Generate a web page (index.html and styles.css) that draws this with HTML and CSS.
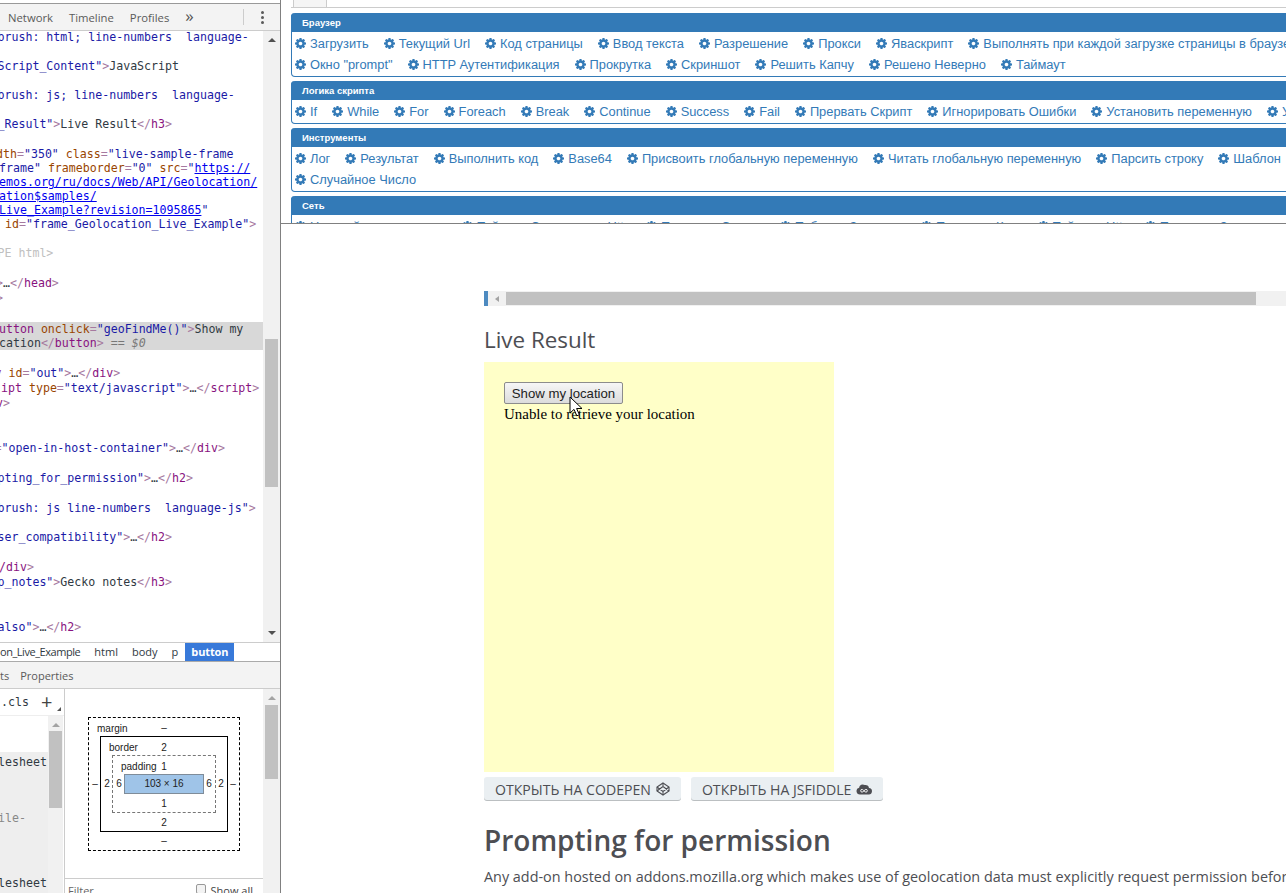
FILE: index.html
```html
<!DOCTYPE html>
<html lang="ru">
<head>
<meta charset="utf-8">
<title>Live Result</title>
<link rel="stylesheet" href="styles.css">
</head>
<body>
<svg class="defs" width="0" height="0" aria-hidden="true">
  <symbol id="cog" viewBox="0 0 1536 1536"><path d="M1024 768q0-106-75-181t-181-75-181 75-75 181 75 181 181 75 181-75 75-181zm512-109v222q0 12-8 23t-20 13l-185 28q-19 54-39 91 35 50 107 138 10 12 10 25t-9 23q-27 37-99 108t-94 71q-12 0-26-9l-138-108q-44 23-91 38-16 136-29 186-7 28-36 28h-222q-14 0-24.5-8.5t-11.5-21.5l-28-184q-49-16-90-37l-141 107q-10 9-25 9-14 0-25-11-126-114-165-168-7-10-7-23 0-12 8-23 15-21 51-66.5t54-70.5q-27-50-41-99l-183-27q-13-2-21-12.5t-8-23.5v-222q0-12 8-23t19-13l186-28q14-46 39-92-40-57-107-138-10-12-10-24 0-10 9-23 26-36 98.5-107.5t94.5-71.5q13 0 26 10l138 107q44-23 91-38 16-136 29-186 7-28 36-28h222q14 0 24.5 8.5t11.5 21.5l28 184q49 16 90 37l142-107q9-9 24-9 13 0 25 10 129 119 165 170 7 8 7 22 0 12-8 23-15 21-51 66.5t-54 70.5q26 50 41 98l183 28q13 2 21 12.5t8 23.5z"/></symbol>
</svg>

<aside class="devtools">
  <div class="toolbar">
    <span class="tool first">Network</span>
    <span class="tool">Timeline</span>
    <span class="tool">Profiles</span>
    <span class="more">»</span>
    <span class="tsep"></span>
    <span class="kebab"><i></i><i></i><i></i></span>
  </div>

  <div class="elements">
    <div class="code">
      <div class="ln"><span class="v">brush: html; line-numbers  language-</span></div>
      <div class="ln g15"><span class="v">Script_Content"</span><span class="b">&gt;</span>JavaScript</div>
      <div class="ln g15"><span class="v">brush: js; line-numbers  language-</span></div>
      <div class="ln g15"><span class="v">_Result"</span><span class="b">&gt;</span>Live Result<span class="b">&lt;/</span><span class="t">h3</span><span class="b">&gt;</span></div>
      <div class="ln g16 far"><span class="a">dth</span><span class="b">=</span><span class="v">"350"</span> <span class="a">class</span><span class="b">=</span><span class="v">"live-sample-frame</span></div>
      <div class="ln near"><span class="v">frame"</span> <span class="a">frameborder</span><span class="b">=</span><span class="v">"0"</span> <span class="a">src</span><span class="b">=</span><span class="v">"</span><span class="u">https://</span></div>
      <div class="ln near"><span class="u">emos.org/ru/docs/Web/API/Geolocation/</span></div>
      <div class="ln near"><span class="u">ation$samples/</span></div>
      <div class="ln near"><span class="u">Live_Example?revision=1095865</span><span class="v">"</span></div>
      <div class="ln in5"><span class="a">id</span><span class="b">=</span><span class="v">"frame_Geolocation_Live_Example"</span><span class="b">&gt;</span></div>
      <div class="ln g15"><span class="d">PE html&gt;</span></div>
      <div class="ln g16 far"><span class="b">&gt;</span>…<span class="b">&lt;/</span><span class="t">head</span><span class="b">&gt;</span></div>
      <div class="ln g1 far"><span class="b">&gt;</span></div>
      <div class="sel">
        <div class="ln near"><span class="t">utton</span> <span class="a">onclick</span><span class="b">=</span><span class="v">"geoFindMe()"</span><span class="b">&gt;</span>Show my</div>
        <div class="ln near"><span>cation</span><span class="b">&lt;/</span><span class="t">button</span><span class="b">&gt;</span> <span class="d2">==</span> <em class="d2">$0</em></div>
      </div>
      <div class="ln g16 far2"><span class="t">v</span> <span class="a">id</span><span class="b">=</span><span class="v">"out"</span><span class="b">&gt;</span>…<span class="b">&lt;/</span><span class="t">div</span><span class="b">&gt;</span></div>
      <div class="ln g1 in1"><span class="t">ipt</span> <span class="a">type</span><span class="b">=</span><span class="v">"text/javascript"</span><span class="b">&gt;</span>…<span class="b">&lt;/</span><span class="t">script</span><span class="b">&gt;</span></div>
      <div class="ln g1 far"><span class="t">v</span><span class="b">&gt;</span></div>
      <div class="ln g31 far2"><span class="b">=</span><span class="v">"open-in-host-container"</span><span class="b">&gt;</span>…<span class="b">&lt;/</span><span class="t">div</span><span class="b">&gt;</span></div>
      <div class="ln g16"><span class="v">pting_for_permission"</span><span class="b">&gt;</span>…<span class="b">&lt;/</span><span class="t">h2</span><span class="b">&gt;</span></div>
      <div class="ln g16"><span class="v">brush: js line-numbers  language-js"</span><span class="b">&gt;</span></div>
      <div class="ln g15"><span class="v">ser_compatibility"</span><span class="b">&gt;</span>…<span class="b">&lt;/</span><span class="t">h2</span><span class="b">&gt;</span></div>
      <div class="ln g16 near"><span class="t">/div</span><span class="b">&gt;</span></div>
      <div class="ln g1"><span class="v">p_notes"</span><span class="b">&gt;</span>Gecko notes<span class="b">&lt;/</span><span class="t">h3</span><span class="b">&gt;</span></div>
      <div class="ln g31"><span class="v">also"</span><span class="b">&gt;</span>…<span class="b">&lt;/</span><span class="t">h2</span><span class="b">&gt;</span></div>
    </div>
    <div class="scroll main-scroll">
      <span class="arr up"></span>
      <span class="thumb el-thumb"></span>
      <span class="arr down"></span>
    </div>
  </div>

  <div class="crumbs">
    <span class="crumb lead">on_Live_Example</span>
    <span class="crumb">html</span>
    <span class="crumb">body</span>
    <span class="crumb">p</span>
    <span class="crumb on">button</span>
  </div>

  <div class="tabs"><span>ts</span><span>Properties</span></div>

  <div class="lower">
    <div class="styles">
      <div class="stylebar"><span class="cls">.cls</span><span class="plus">+</span><span class="corner"></span></div>
      <div class="stylebody">
        <div class="rules">
          <div class="rule-blank"></div>
          <div class="rule-grey">
            <div class="rl one">lesheet</div>
            <div class="rl two">ile-</div>
            <div class="rl three">lesheet</div>
          </div>
        </div>
        <div class="scroll mini-scroll"><span class="arr up pale"></span><span class="thumb st-thumb"></span></div>
      </div>
    </div>
    <div class="computed">
      <div class="boxpane">
        <div class="bm bm-margin">
          <span class="bm-label">margin</span>
          <div class="bm-top">–</div>
          <div class="bm-side">–</div>
          <div class="bm bm-border">
            <span class="bm-label">border</span>
            <div class="bm-top">2</div>
            <div class="bm-side">2</div>
            <div class="bm bm-padding">
              <span class="bm-label">padding</span>
              <div class="bm-top">1</div>
              <div class="bm-side">6</div>
              <div class="bm-content">103 × 16</div>
              <div class="bm-side">6</div>
              <div class="bm-top">1</div>
            </div>
            <div class="bm-side">2</div>
            <div class="bm-top">2</div>
          </div>
          <div class="bm-side">–</div>
          <div class="bm-top">–</div>
        </div>
      </div>
      <div class="filter"><span>Filter</span><label class="showall"><span class="check"></span>Show all</label></div>
    </div>
    <div class="scroll low-scroll"><span class="arr up pale"></span><span class="thumb lo-thumb"></span></div>
  </div>
</aside>

<main class="right">
  <section class="blocks">
    <div class="topstub"><span class="stubtab"></span></div>

    <div class="group">
      <h4>Браузер</h4>
      <div class="row">
        <a><svg><use href="#cog"/></svg>Загрузить</a>
        <a><svg><use href="#cog"/></svg>Текущий Url</a>
        <a><svg><use href="#cog"/></svg>Код страницы</a>
        <a><svg><use href="#cog"/></svg>Ввод текста</a>
        <a><svg><use href="#cog"/></svg>Разрешение</a>
        <a><svg><use href="#cog"/></svg>Прокси</a>
        <a><svg><use href="#cog"/></svg>Яваскрипт</a>
        <a><svg><use href="#cog"/></svg>Выполнять при каждой загрузке страницы в браузере</a>
      </div>
      <div class="row">
        <a><svg><use href="#cog"/></svg>Окно "prompt"</a>
        <a><svg><use href="#cog"/></svg>HTTP Аутентификация</a>
        <a><svg><use href="#cog"/></svg>Прокрутка</a>
        <a><svg><use href="#cog"/></svg>Скриншот</a>
        <a><svg><use href="#cog"/></svg>Решить Капчу</a>
        <a><svg><use href="#cog"/></svg>Решено Неверно</a>
        <a><svg><use href="#cog"/></svg>Таймаут</a>
      </div>
    </div>

    <div class="group">
      <h4>Логика скрипта</h4>
      <div class="row">
        <a><svg><use href="#cog"/></svg>If</a>
        <a><svg><use href="#cog"/></svg>While</a>
        <a><svg><use href="#cog"/></svg>For</a>
        <a><svg><use href="#cog"/></svg>Foreach</a>
        <a><svg><use href="#cog"/></svg>Break</a>
        <a><svg><use href="#cog"/></svg>Continue</a>
        <a><svg><use href="#cog"/></svg>Success</a>
        <a><svg><use href="#cog"/></svg>Fail</a>
        <a><svg><use href="#cog"/></svg>Прервать Скрипт</a>
        <a><svg><use href="#cog"/></svg>Игнорировать Ошибки</a>
        <a><svg><use href="#cog"/></svg>Установить переменную</a>
        <a><svg><use href="#cog"/></svg>Увеличить переменную</a>
      </div>
    </div>

    <div class="group">
      <h4>Инструменты</h4>
      <div class="row">
        <a><svg><use href="#cog"/></svg>Лог</a>
        <a><svg><use href="#cog"/></svg>Результат</a>
        <a><svg><use href="#cog"/></svg>Выполнить код</a>
        <a><svg><use href="#cog"/></svg>Base64</a>
        <a><svg><use href="#cog"/></svg>Присвоить глобальную переменную</a>
        <a><svg><use href="#cog"/></svg>Читать глобальную переменную</a>
        <a><svg><use href="#cog"/></svg>Парсить строку</a>
        <a><svg><use href="#cog"/></svg>Шаблон</a>
      </div>
      <div class="row">
        <a><svg><use href="#cog"/></svg>Случайное Число</a>
      </div>
    </div>

    <div class="group">
      <h4>Сеть</h4>
      <div class="row">
        <a><svg><use href="#cog"/></svg>Настройки соединения</a>
        <a><svg><use href="#cog"/></svg>Таймаут Соединения Http</a>
        <a><svg><use href="#cog"/></svg>Получить Ответы</a>
        <a><svg><use href="#cog"/></svg>Таблица Запросов</a>
        <a><svg><use href="#cog"/></svg>Получить Куки</a>
        <a><svg><use href="#cog"/></svg>Таймаут Http</a>
        <a><svg><use href="#cog"/></svg>Получить Запрос</a>
      </div>
    </div>
  </section>

  <article class="doc">
    <div class="hscroll"><span class="hs-arrow"></span><span class="hs-thumb"></span></div>
    <h3>Live Result</h3>
    <div class="sample">
      <button class="native" type="button">Show my location</button>
      <div class="sample-out">Unable to retrieve your location</div>
      <svg class="cursor" width="15" height="22" viewBox="0 0 15 22"><path d="M1 1v16l4-3.600 2.800 6.400 2.600-1.100-2.800-6.200H13z" fill="#fff" stroke="#000" stroke-width="1"/></svg>
    </div>
    <div class="open-btns">
      <a class="btn">Открыть на CodePen
        <svg width="14" height="14" viewBox="0 0 14 14" fill="none" stroke="#4d4e53" stroke-width="1.1"><path d="M7 1l6 4v4l-6 4-6-4V5z"/><path d="M7 1v3.500M7 9.500V13M1 5l6 4.500L13 5M1 9l6-4.500L13 9"/></svg>
      </a>
      <a class="btn">Открыть на JSFiddle
        <svg width="16" height="12" viewBox="0 0 16 12"><path d="M4 11.500a3.400 3.400 0 0 1-.9-6.700 3.600 3.600 0 0 1 5.600-2.700 3.400 3.400 0 0 1 4.300 2.900 2.900 2.900 0 0 1-.6 6.500z" fill="#4d4e53"/><path d="M8 7.800c-.8-1-1.400-1.400-2-1.400a1.350 1.350 0 0 0 0 2.700c.6 0 1.200-.4 2-1.300.8-.9 1.400-1.400 2-1.400a1.350 1.350 0 0 1 0 2.700c-.6 0-1.200-.4-2-1.300z" fill="none" stroke="#fff" stroke-width=".9"/></svg>
      </a>
    </div>
    <h2>Prompting for permission</h2>
    <p>Any add-on hosted on addons.mozilla.org which makes use of geolocation data must explicitly request permission before doing so.</p>
  </article>
</main>
</body>
</html>
```

FILE: styles.css
```css
* { box-sizing: border-box; }
html, body { margin: 0; height: 893px; overflow: hidden; background: #fff; }
body { display: flex; width: 1286px; font-family: "Open Sans", sans-serif; }
.defs { position: absolute; }

/* devtools */
.devtools {
  width: 281px; height: 893px; flex: none; display: flex; flex-direction: column;
  border-right: 1px solid #808080; overflow: hidden; background: #fff;
}
.toolbar {
  height: 28px; flex: none; margin-top: 3px; display: flex; align-items: center;
  background: #f3f3f3; border-top: 1px solid #999; border-bottom: 1px solid #ccc;
  font-size: 11.3px; color: #5a5a5a;
}
.tool { margin-right: 16px; }
.tool.first { margin-left: 8px; }
.more { font-size: 17px; line-height: 1; color: #555; margin-top: -3px; }
.tsep { width: 1px; height: 16px; background: #ccc; margin-left: 49px; }
.kebab { display: flex; flex-direction: column; gap: 2px; margin-left: 17px; }
.kebab i { width: 3px; height: 3px; background: #5a5a5a; border-radius: 50%; display: block; }

.elements { height: 611px; flex: none; display: flex; }
.code {
  flex: 1; min-width: 0; overflow: hidden;
  font: 11.6px/14px "DejaVu Sans Mono", monospace; color: #303942;
}
.ln { height: 14px; margin-left: -2.5px; white-space: pre; }
.code > .ln:first-child { margin-top: -1px; }
.near { margin-left: -1px; }
.far { margin-left: -4px; }
.far2 { margin-left: -5.5px; }
.in5 { margin-left: 5px; }
.in1 { margin-left: 1px; }
.g1 { margin-top: 1px; }
.g15 { margin-top: 15px; }
.g16 { margin-top: 16px; }
.g31 { margin-top: 31px; }
.sel { background: #d8d8d8; height: 28px; margin-top: 17px; }
.sel + .ln { margin-top: 16px; }
.code .t { color: #881280; }
.code .a { color: #994500; }
.code .v { color: #1a1aa6; }
.code .b { color: #a6799f; }
.code .d { color: #c0c0c0; }
.code .d2 { color: #777; }
.code .u { color: #0000ee; text-decoration: underline; }

.scroll { flex: none; background: #f1f1f1; display: flex; flex-direction: column; align-items: center; }
.main-scroll { width: 17px; }
.thumb { display: block; background: #c1c1c1; width: 13px; }
.arr { width: 0; height: 0; border-left: 4px solid transparent; border-right: 4px solid transparent; display: block; }
.arr.up { border-bottom: 4px solid #505050; margin-top: 7px; }
.arr.up.pale { border-bottom-color: #a3a3a3; }
.arr.down { border-top: 4px solid #505050; margin-top: auto; margin-bottom: 7px; }
.el-thumb { height: 148px; margin-top: 297px; }

.crumbs {
  height: 20px; flex: none; display: flex; border-top: 1px solid #ccc; border-bottom: 1px solid #aaa;
  font-size: 11px; line-height: 18px; color: #303942;
}
.crumb { padding: 0 7px; }
.crumb.lead { padding: 0 7px 0 0; letter-spacing: -.45px; }
.crumb.on { background: #3879d9; color: #fff; font-weight: 700; padding: 0 6px; letter-spacing: -.1px; }

.tabs {
  height: 27px; flex: none; display: flex; gap: 11px; align-items: center; background: #f3f3f3;
  border-bottom: 1px solid #ccc; font-size: 11px; color: #5a5a5a; padding-top: 1px;
}

.lower { flex: 1; min-height: 0; display: flex; }
.styles { width: 65px; flex: none; display: flex; flex-direction: column; border-right: 1px solid #ccc; overflow: hidden; }
.stylebar { height: 27px; flex: none; display: flex; align-items: center; position: relative; border-bottom: 1px solid #eee; }
.cls { font: 11.6px "DejaVu Sans Mono", monospace; color: #303942; margin-left: 1px; }
.plus { font-size: 20px; line-height: 1; color: #444; margin-left: 12px; }
.corner { position: absolute; right: 3px; bottom: 4px; width: 0; height: 0; border-left: 4px solid transparent; border-bottom: 4px solid #555; }
.stylebody { flex: 1; display: flex; min-height: 0; }
.rules { flex: none; width: 48px; display: flex; flex-direction: column; font: 11.6px/14px "DejaVu Sans Mono", monospace; color: #303942; overflow: hidden; }
.rule-blank { height: 36px; flex: none; }
.rule-grey { flex: 1; background: #eee; padding-top: 3px; }
.rl { height: 14px; margin-left: -2px; white-space: pre; }
.rl.two { margin-top: 42px; color: #888; }
.rl.three { margin-top: 51px; }
.mini-scroll { width: 15px; }
.st-thumb { height: 77px; margin-top: 4px; }
.computed { flex: 1; min-width: 0; display: flex; flex-direction: column; }
.boxpane { flex: 1; padding: 28px 0 0 23px; }
.bm {
  display: grid; grid-template-columns: 12px 1fr 12px; grid-template-rows: 19px 1fr 19px;
  position: relative; font: 10px/1 "Liberation Sans", sans-serif; color: #222; text-align: center;
}
.bm-margin { width: 152px; height: 134px; border: 1px dashed #000; }
.bm-border { border: 1px solid #000; margin: -1px; }
.bm-padding { border: 1px dashed #777; margin: -1px; }
.bm-top { grid-column: 1 / -1; align-self: center; padding-top: 2px; }
.bm-margin > .bm-top { padding-top: 0; }
.bm-side { align-self: center; }
.bm-label { position: absolute; left: 8px; top: 6px; }
.bm-content { background: #9fc4e8; border: 1px solid #7f8c99; margin: -1px; display: flex; align-items: center; justify-content: center; }
.filter {
  height: 15px; flex: none; border-top: 1px solid #ccc; display: flex; justify-content: space-between;
  font-size: 11px; line-height: 24px; color: #666; padding: 0 10px 0 3px; overflow: hidden;
}
.showall { display: flex; color: #444; }
.check { width: 10px; height: 10px; border: 1px solid #999; border-radius: 2px; margin: 5px 5px 0 0; background: #f3f3f3; }
.low-scroll { width: 17px; }
.lo-thumb { height: 74px; margin-top: 5px; }

/* right */
.right { flex: 1; min-width: 0; display: flex; flex-direction: column; overflow: hidden; }
.blocks { height: 224px; flex: none; overflow: hidden; border-bottom: 1px solid #808080; padding-left: 10px; }
.topstub { height: 8px; border-bottom: 1px solid #ccc; margin-bottom: 5px; width: 1100px; }
.stubtab { display: block; width: 34px; height: 8px; margin-left: 2px; background: #f5f5f5; border: 1px solid #ccc; border-top: 0; }
.group {
  width: 1100px; margin-bottom: 4px; border: 1px solid #337ab7; border-top: 0; border-radius: 4px;
  padding-bottom: 1px; font-family: "Liberation Sans", sans-serif;
}
.group h4 {
  margin: 0 -1px 1px; height: 19px; background: #337ab7; color: #fff; border-radius: 4px 4px 0 0;
  font-size: 9.5px; line-height: 19px; font-weight: 700; padding-left: 11px;
}
.row { display: flex; gap: 15px; height: 21px; align-items: center; padding-left: 3px; white-space: nowrap; }
.row a { display: flex; align-items: center; gap: 4px; color: #337ab7; font-size: 12.85px; flex: none; }
.row svg { width: 11px; height: 11px; fill: #337ab7; flex: none; }

.doc { flex: 1; padding: 67px 0 0 203px; color: #4d4e53; white-space: nowrap; }
.hscroll { height: 15px; display: flex; align-items: center; background: #f1f1f1; border-left: 4px solid #4d8ac0; }
.hs-arrow { width: 0; height: 0; border-top: 3px solid transparent; border-bottom: 3px solid transparent; border-right: 4px solid #a3a3a3; margin-left: 7px; }
.hs-thumb { width: 750px; height: 13px; background: #c1c1c1; margin-left: 7px; }
.doc h3 { margin: 19px 0 8px; font-size: 22.4px; line-height: 29px; font-weight: 400; }
.sample { width: 350px; height: 410px; background: #ffffc8; padding: 20px; position: relative; }
.native {
  display: block; width: 119px; height: 22px; padding: 2px 6px 0; margin: 0;
  font: 13.2px/16px "Liberation Sans", sans-serif; color: #222;
  border: 1px solid #8c8c8c; border-radius: 2px; background: linear-gradient(#f6f6f6, #dcdcdc);
  white-space: nowrap;
}
.sample-out { font: 14.95px/20px "Liberation Serif", serif; color: #000; }
.cursor { position: absolute; left: 85px; top: 34px; }
.open-btns { display: flex; gap: 10px; margin-top: 5px; }
.btn {
  height: 24px; display: flex; align-items: center; gap: 5px; padding: 0 11px; background: #eaeff2;
  border-radius: 3px; box-shadow: inset 0 -1px 0 rgba(0,0,0,.2);
  text-transform: uppercase; font-size: 14.1px; color: #4d4e53;
}
.doc h2 { margin: 21px 0 0; font-size: 28px; line-height: 36px; font-weight: 600; }
.doc p { margin: 9px 0 0; font-size: 14.4px; line-height: 20px; }
```
